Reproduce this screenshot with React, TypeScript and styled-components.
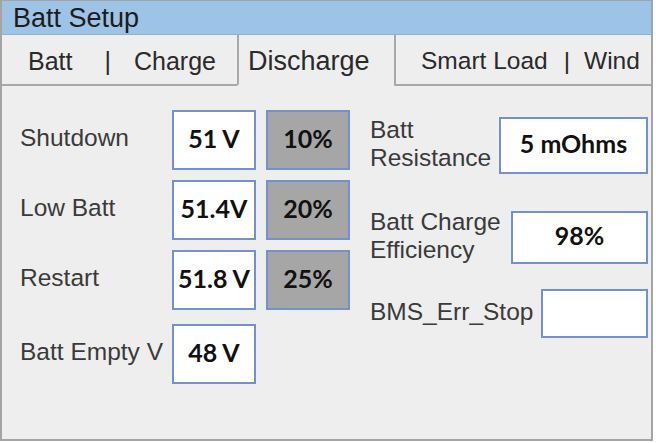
import React from 'react';
import styled, { createGlobalStyle } from 'styled-components';

const GlobalStyle = createGlobalStyle`
  body {
    margin: 0;
    background: #ffffff;
  }
`;

const Frame = styled.div`
  width: 653px;
  height: 441px;
  box-sizing: border-box;
  border: 2px solid #a4a4a4;
  border-top: 1px solid #a4a4a4;
  background: #eeeeee;
  display: flex;
  flex-direction: column;
  font-family: 'Liberation Sans', Arial, sans-serif;
  color: #363636;
`;

const TitleBar = styled.div`
  height: 33px;
  line-height: 34px;
  padding-left: 11px;
  background: #9dc3e6;
  border-bottom: 1px solid #8fb0d0;
  font-size: 27px;
  color: #1c1c1c;
`;

const TabRow = styled.div`
  display: flex;
  height: 51px;
`;

const Tab = styled.div<{ $active?: boolean; $width?: number; $pad: number; $size: number }>`
  box-sizing: border-box;
  display: flex;
  align-items: center;
  padding-left: ${({ $pad }) => $pad}px;
  padding-top: 3px;
  font-size: ${({ $size }) => $size}px;
  color: #2a2a2a;
  ${({ $width }) => ($width ? `width: ${$width}px;` : 'flex: 1;')}
  border-bottom: 2px solid ${({ $active }) => ($active ? 'transparent' : '#a8a8a8')};
  & + & {
    border-left: 2px solid #a8a8a8;
  }
`;

const Sep = styled.span<{ $left: number; $right: number }>`
  margin: 0 ${({ $right }) => $right}px 0 ${({ $left }) => $left}px;
`;

const Body = styled.div`
  flex: 1;
  display: grid;
  grid-template-columns: 350px 1fr;
  padding: 24px 3px 0 18px;
`;

const Column = styled.div`
  display: flex;
  flex-direction: column;
`;

const Row = styled.div<{ $top?: number; $height: number }>`
  display: flex;
  align-items: center;
  height: ${({ $height }) => $height}px;
  margin-top: ${({ $top }) => $top ?? 0}px;
`;

const Label = styled.div<{ $width?: number }>`
  font-size: 24.5px;
  line-height: 28px;
  color: #3a3a3a;
  padding-bottom: 4px;
  ${({ $width }) => ($width ? `width: ${$width}px; flex: none;` : 'flex: 1;')}
`;

const ValueBox = styled.div<{ $width: number; $grey?: boolean }>`
  box-sizing: border-box;
  width: ${({ $width }) => $width}px;
  height: 100%;
  margin-right: 10px;
  border: 2px solid #7391ca;
  background: ${({ $grey }) => ($grey ? '#a6a6a6' : '#ffffff')};
  display: flex;
  align-items: center;
  justify-content: center;
  padding-bottom: 5px;
  font-family: Lato, 'Noto Sans', sans-serif;
  font-weight: 700;
  font-size: 25px;
  color: #111111;
  &:last-child {
    margin-right: 0;
  }
`;

const leftRows = [
  { label: 'Shutdown', volts: '51 V', pct: '10%', top: 0 },
  { label: 'Low Batt', volts: '51.4V', pct: '20%', top: 10 },
  { label: 'Restart', volts: '51.8 V', pct: '25%', top: 10 },
  { label: 'Batt Empty V', volts: '48 V', pct: null, top: 14 },
];

const App = () => (
  <>
    <GlobalStyle />
    <Frame>
      <TitleBar>Batt Setup</TitleBar>
      <TabRow>
        <Tab $width={235} $pad={26} $size={25}>
          Batt
          <Sep $left={32} $right={23}>|</Sep>
          Charge
        </Tab>
        <Tab $active $width={157} $pad={9} $size={27}>
          Discharge
        </Tab>
        <Tab $pad={25} $size={24.5}>
          Smart Load
          <Sep $left={16} $right={14}>|</Sep>
          Wind
        </Tab>
      </TabRow>
      <Body>
        <Column>
          {leftRows.map((r) => (
            <Row key={r.label} $height={60} $top={r.top}>
              <Label $width={152}>{r.label}</Label>
              <ValueBox $width={84}>{r.volts}</ValueBox>
              {r.pct && (
                <ValueBox $width={84} $grey>
                  {r.pct}
                </ValueBox>
              )}
            </Row>
          ))}
        </Column>
        <Column>
          <Row $height={57} $top={7}>
            <Label>
              Batt
              <br />
              Resistance
            </Label>
            <ValueBox $width={149}>5 mOhms</ValueBox>
          </Row>
          <Row $height={53} $top={37}>
            <Label>
              Batt Charge
              <br />
              Efficiency
            </Label>
            <ValueBox $width={137}>98%</ValueBox>
          </Row>
          <Row $height={49} $top={25}>
            <Label>BMS_Err_Stop</Label>
            <ValueBox $width={107} />
          </Row>
        </Column>
      </Body>
    </Frame>
  </>
);

export default App;
